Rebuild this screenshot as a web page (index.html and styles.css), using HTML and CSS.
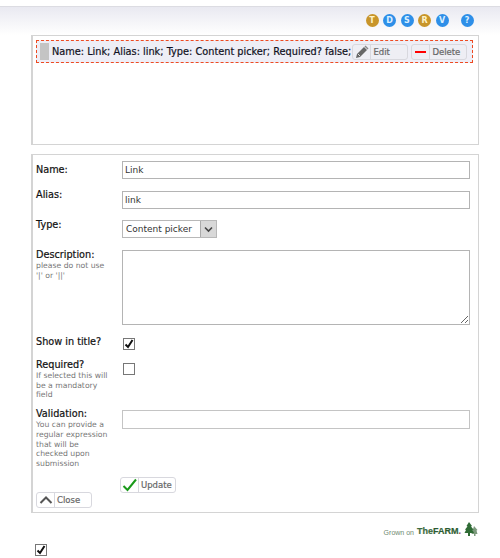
FILE: index.html
```html
<!DOCTYPE html>
<html lang="en">
<head>
    <meta charset="UTF-8">
    <title>Edit field</title>
    <link rel="stylesheet" href="styles.css">
</head>
<body>
    <div class="header">
        <div class="toolbar">
            <span class="dot gold">T</span>
            <span class="dot blue">D</span>
            <span class="dot blue">S</span>
            <span class="dot gold">R</span>
            <span class="dot blue">V</span>
            <span class="dot blue help">?</span>
        </div>
    </div>

    <div class="panel list-panel">
        <div class="field-row">
            <span class="handle"></span>
            <span class="field-text">Name: Link; Alias: link; Type: Content picker; Required? false;</span>
            <a class="btn btn-edit">
                <span class="btn-icon">
                    <svg width="14" height="14" viewBox="0 0 14 14"><path d="M1 13l1-4 7-7 3 3-7 7z" fill="#666"/><path d="M9.500 1.500l1-1 3 3-1 1z" fill="#888"/><path d="M3 9l2 2" stroke="#ddd" stroke-width="1"/></svg>
                </span>
                <span class="btn-label">Edit</span>
            </a>
            <a class="btn btn-delete">
                <span class="btn-icon">
                    <svg width="14" height="14" viewBox="0 0 14 14"><rect x="1" y="6" width="11" height="2" fill="#f00"/></svg>
                </span>
                <span class="btn-label">Delete</span>
            </a>
        </div>
    </div>

    <div class="panel form-panel">
        <div class="form-row row-name">
            <label>Name:</label>
            <input class="text-input" type="text" value="Link">
        </div>
        <div class="form-row row-alias">
            <label>Alias:</label>
            <input class="text-input" type="text" value="link">
        </div>
        <div class="form-row row-type">
            <label>Type:</label>
            <div class="select-box">
                <span class="select-value">Content picker</span>
                <span class="select-arrow">
                    <svg width="9" height="7" viewBox="0 0 9 7"><path d="M1 1.500l3.500 3.500 3.500-3.500" fill="none" stroke="#444" stroke-width="1.600"/></svg>
                </span>
            </div>
        </div>
        <div class="form-row row-desc">
            <label>Description:<small>please do not use<br>'|' or '||'</small></label>
            <textarea class="text-area"></textarea>
        </div>
        <div class="form-row row-show">
            <label>Show in title?</label>
            <span class="check">
                <svg width="10" height="10" viewBox="0 0 10 10"><path d="M1.500 5.500l2.500 2.500 4.500-7" fill="none" stroke="#111" stroke-width="2"/></svg>
            </span>
        </div>
        <div class="form-row row-required">
            <label>Required?<small>If selected this will<br>be a mandatory<br>field</small></label>
            <span class="check"></span>
        </div>
        <div class="form-row row-validation">
            <label>Validation:<small>You can provide a<br>regular expression<br>that will be<br>checked upon<br>submission</small></label>
            <input class="text-input tall" type="text">
        </div>
        <div class="update-row">
            <a class="btn btn-update">
                <span class="btn-icon">
                    <svg width="16" height="14" viewBox="0 0 16 14"><path d="M1.500 8l4 4 8.500-10.500" fill="none" stroke="#1a9a1a" stroke-width="2"/></svg>
                </span>
                <span class="btn-label">Update</span>
            </a>
        </div>
        <a class="btn btn-close">
            <span class="btn-icon">
                <svg width="14" height="10" viewBox="0 0 14 10"><path d="M1.500 8l5.500-5.500 5.500 5.500" fill="none" stroke="#555" stroke-width="2"/></svg>
            </span>
            <span class="btn-label">Close</span>
        </a>
    </div>

    <div class="footer">
        <span class="grown">Grown on</span>
        <span class="farm">The<b>FARM</b><i>.</i></span>
        <svg class="trees" width="14" height="14" viewBox="0 0 14 14"><path d="M10 4l3.500 4-1 .5 1 3.500h-6z" fill="#7d9a7d"/><path d="M5 0l3 4-1 .5 2.500 3-1 .5 1.500 3H.500L2 8l-1-.5 2.500-3-1-.5z" fill="#2f6b35"/><rect x="4" y="11" width="2" height="3" fill="#2f6b35"/><rect x="10" y="12" width="1.500" height="2" fill="#7d9a7d"/></svg>
    </div>

    <span class="check check-bottom">
        <svg width="10" height="10" viewBox="0 0 10 10"><path d="M1.500 5.500l2.500 2.500 4.500-7" fill="none" stroke="#111" stroke-width="2"/></svg>
    </span>
</body>
</html>
```

FILE: styles.css
```css
html, body {
    margin: 0;
    padding: 0;
}
body {
    height: 558px;
    overflow: hidden;
    background: #fff;
    font-family: "DejaVu Sans", sans-serif;
    font-size: 10px;
    color: #222;
}
.header {
    box-sizing: border-box;
    height: 29px;
    border-top: 1px solid #dcdce2;
    margin-top: 6px;
    background: linear-gradient(#e9e9f1, #fff);
}
.toolbar {
    display: flex;
    gap: 4.500px;
    padding: 7px 0 0 365.500px;
}
.dot {
    width: 13px;
    height: 13px;
    border-radius: 50%;
    background: #2e8fe8;
    color: #dcefff;
    font-size: 8px;
    font-weight: bold;
    line-height: 13px;
    text-align: center;
}
.dot.gold {
    background: #c8952a;
    color: #fff3c8;
}
.dot.help {
    margin-left: 7.500px;
}
.panel {
    box-sizing: border-box;
    width: 448px;
    margin-left: 31px;
    border: 1px solid #d4d4d4;
    border-left-width: 2px;
    background: #fff;
}
.list-panel {
    height: 110px;
    padding: 4px 5px 0 3px;
}
.field-row {
    display: flex;
    align-items: center;
    height: 23px;
    box-sizing: border-box;
    border: 1px dashed #ee4b22;
    background: #eeeef6;
    padding-left: 3px;
}
.handle {
    width: 9px;
    height: 17px;
    background: #c4c4c4;
    margin-right: 3px;
}
.field-text {
    font-size: 9.750px;
    color: #111122;
    -webkit-text-stroke: 0.2px #111122;
    white-space: nowrap;
}
.btn {
    display: inline-flex;
    align-items: center;
    box-sizing: border-box;
    height: 16px;
    border: 1px solid #d8d8de;
    border-radius: 3px;
    background: #eeeef4;
    color: #666;
    font-size: 8.500px;
    -webkit-text-stroke: 0.2px #666;
}
.btn-icon {
    display: flex;
    align-items: center;
    justify-content: center;
    width: 17px;
    height: 100%;
    border-right: 1px solid #d8d8de;
}
.btn-label {
    padding-left: 2px;
}
.btn-edit {
    width: 56px;
    margin-left: 1px;
}
.btn-delete {
    width: 56px;
    margin-left: 3px;
}
.form-panel {
    height: 359px;
    margin-top: 9px;
    padding: 6px 0 0 3px;
}
.form-row {
    display: grid;
    grid-template-columns: 86px 348px;
}
.form-row label {
    font-size: 9.700px;
    line-height: 12px;
    color: #111;
    -webkit-text-stroke: 0.2px #111;
}
.row-name label {
    padding-top: 3px;
}
.row-alias label {
    margin-top: -2px;
}
.row-type label {
    margin-top: -1px;
}
.row-desc label {
    margin-top: -1px;
}
.row-validation label {
    margin-top: -2px;
}
small {
    display: block;
    font-size: 7.700px;
    line-height: 9.700px;
    color: #777;
    -webkit-text-stroke: 0;
}
.text-input {
    box-sizing: border-box;
    width: 348px;
    height: 18px;
    margin: 0;
    padding: 0 2px;
    border: 1px solid #b4b4b4;
    background: #fff;
    font-family: "DejaVu Sans", sans-serif;
    font-size: 9px;
    color: #333;
    outline: none;
}
.text-input.tall {
    height: 19px;
    border-color: #c4c4c4;
}
.row-alias {
    margin-top: 12px;
}
.row-type {
    margin-top: 11px;
}
.select-box {
    display: flex;
    box-sizing: border-box;
    width: 95px;
    height: 18px;
    border: 1px solid #b8b8b8;
    font-size: 9px;
    color: #333;
}
.select-value {
    flex: 1;
    padding-left: 3px;
    line-height: 16px;
}
.select-arrow {
    display: flex;
    align-items: center;
    justify-content: center;
    width: 15px;
    background: #d8d8d8;
    border-left: 1px solid #aaa;
}
.row-desc {
    margin-top: 12px;
}
.text-area {
    box-sizing: border-box;
    width: 348px;
    height: 75px;
    margin: 0;
    border: 1px solid #b4b4b4;
    outline: none;
    display: block;
}
.row-show {
    margin-top: 11px;
}
.row-required {
    margin-top: 9px;
}
.row-required .check {
    margin-top: 4px;
}
.row-validation {
    margin-top: 10px;
}
.check {
    display: flex;
    align-items: center;
    justify-content: center;
    box-sizing: border-box;
    width: 12px;
    height: 12px;
    margin: 2px 0 0 1px;
    border: 1px solid #777;
    background: #fff;
}
.update-row {
    padding-left: 84px;
    margin-top: 8px;
    height: 15px;
}
.btn-update {
    width: 56px;
}
.btn-close {
    width: 56px;
    background: #fff;
}
.update-row .btn {
    background: #fff;
}
.footer {
    display: flex;
    align-items: flex-end;
    justify-content: flex-end;
    width: 478px;
    height: 15px;
    margin-top: 8px;
}
.grown {
    font-size: 7px;
    color: #6f8a70;
    margin-right: 3px;
    font-family: "Liberation Sans", sans-serif;
}
.farm {
    font-family: "Liberation Sans", sans-serif;
    font-size: 9px;
    font-weight: bold;
    color: #3d6b42;
    -webkit-text-stroke: 0.2px #3d6b42;
}
.farm b {
    color: #2a5a30;
}
.farm i {
    color: #e4484f;
    font-style: normal;
}
.trees {
    margin-left: 3px;
}
.check-bottom {
    margin: 8px 0 0 35px;
}
```
